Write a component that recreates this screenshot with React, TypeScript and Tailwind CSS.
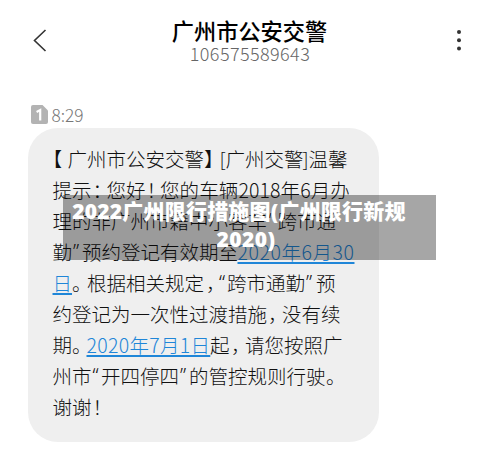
type Segment = { text: string; className: string; link?: boolean };

// Each inner array is one line of the message. Punctuation is half width.
const lines: Segment[][] = [
  [
    { text: "【", className: "w-[15px]" },
    { text: "广州市公安交警", className: "w-[136.5px]" },
    { text: "】", className: "w-[15.5px]" },
    { text: "[", className: "w-[6px]" },
    { text: "广州交警", className: "w-[77px]" },
    { text: "]", className: "w-[6px]" },
    { text: "温馨", className: "w-[40px]" },
  ],
  [
    { text: "提示", className: "w-[40px]" },
    { text: "：", className: "w-[14px]" },
    { text: "您好", className: "w-[40px]" },
    { text: "！", className: "w-[13.5px]" },
    { text: "您的车辆2018年6月办", className: "w-[191px] tracking-[0.1px]" },
  ],
  [
    { text: "理的非广州市籍中小客车", className: "w-[216px]" },
    { text: "“", className: "w-[9px] font-['Noto_Sans']" },
    { text: "跨市通", className: "w-[60px]" },
  ],
  [
    { text: "勤", className: "w-[20.5px]" },
    { text: "”", className: "w-[9px] font-['Noto_Sans']" },
    { text: "预约登记有效期至", className: "w-[155.5px]" },
    { text: "2020年6月30", className: "w-[117px] tracking-[0.55px]", link: true },
  ],
  [
    { text: "日", className: "w-[19.5px]", link: true },
    { text: "。", className: "w-[15px]" },
    { text: "根据相关规定", className: "w-[119px]" },
    { text: "，", className: "w-[13px]" },
    { text: "“", className: "w-[8px] font-['Noto_Sans']" },
    { text: "跨市通勤", className: "w-[79px]" },
    { text: "”", className: "w-[10px] font-['Noto_Sans']" },
    { text: "预", className: "w-[20px]" },
  ],
  [
    { text: "约登记为一次性过渡措施", className: "w-[215.5px]" },
    { text: "，", className: "w-[14px]" },
    { text: "没有续", className: "w-[60px]" },
  ],
  [
    { text: "期", className: "w-[19.5px]" },
    { text: "。", className: "w-[14.5px]" },
    { text: "2020年7月1日", className: "w-[123.5px] tracking-[0.3px]", link: true },
    { text: "起", className: "w-[21px]" },
    { text: "，", className: "w-[14px]" },
    { text: "请您按照广", className: "w-[99px]" },
  ],
  [
    { text: "州市", className: "w-[40px]" },
    { text: "“", className: "w-[8.5px] font-['Noto_Sans']" },
    { text: "开四停四", className: "w-[79px]" },
    { text: "”", className: "w-[9px] font-['Noto_Sans']" },
    { text: "的管控规则行驶", className: "w-[137px]" },
    { text: "。", className: "w-[15px]" },
  ],
  [
    { text: "谢谢", className: "w-[40px]" },
    { text: "！", className: "w-[14px]" },
  ],
];

function Header() {
  return (
    <header className="flex h-[76px] items-start justify-between pr-[38px] pl-[33px]">
      <svg className="mt-[29px] h-[23px] w-[14px]" viewBox="0 0 14 23" fill="none" stroke="#333" strokeWidth="1.6">
        <path d="M12.5 1 1.5 11.5l11 10.5" />
      </svg>
      <div className="flex flex-col items-center pr-[4px]">
        <h1 className="mt-[16px] text-[22.2px] leading-[28px] font-medium whitespace-nowrap text-black">
          广州市公安交警
        </h1>
        <p className="-mt-px pl-px text-[18px] leading-[20px] font-light tracking-[0.4px] text-[#666]">
          106575589643
        </p>
      </div>
      <svg className="mt-[29px] h-[23px] w-[6px]" viewBox="0 0 6 23" fill="#333">
        <circle cx="3" cy="3" r="2" />
        <circle cx="3" cy="11.3" r="2" />
        <circle cx="3" cy="19.6" r="2" />
      </svg>
    </header>
  );
}

function Timestamp() {
  return (
    <div className="flex h-[52px] items-end gap-[3.5px] pb-[3px] pl-[31px]">
      <svg className="mb-px h-[19px] w-[17px]" viewBox="0 0 17 19">
        <path d="M2 0h9.5L17 5.5V17a2 2 0 0 1-2 2H2a2 2 0 0 1-2-2V2a2 2 0 0 1 2-2Z" fill="#b3b3b3" />
        <path d="M5.6 7 9.2 5V15.5" fill="none" stroke="white" strokeWidth="2.2" />
      </svg>
      <span className="text-[17.3px] leading-[21px] font-light text-[#777]">8:29</span>
    </div>
  );
}

export default function App() {
  return (
    <main className="relative h-[455px] w-[500px] overflow-hidden bg-white font-['Noto_Sans_CJK_SC',sans-serif]">
      <Header />
      <Timestamp />
      <section className="ml-[28px] h-[314px] w-[351px] rounded-[30px] bg-[#efefef] pt-[14.5px] pl-[24.5px]">
        {lines.map((line, i) => (
          <p
            key={i}
            className="flex h-[31.1px] text-[19.5px] leading-[31px] font-light whitespace-nowrap text-[#111] [font-feature-settings:'halt']"
          >
            {line.map((s, j) =>
              s.link ? (
                <a key={j} className={`${s.className} shrink-0 text-[#1f86d8] underline decoration-[1.5px] underline-offset-[1.5px]`}>
                  {s.text}
                </a>
              ) : (
                <span key={j} className={`${s.className} shrink-0`}>
                  {s.text}
                </span>
              )
            )}
          </p>
        ))}
      </section>
      <div className="absolute top-[195px] left-[63px] flex h-[65px] w-[373px] flex-col items-center bg-black/35 pt-[2px] font-['Noto_Sans','Noto_Sans_CJK_SC',sans-serif] text-[21px] leading-[28px] font-black tracking-[0.2px] whitespace-nowrap text-white">
        <span className="pr-[21px]">2022广州限行措施图(广州限行新规</span>
        <span className="pr-[7px] tracking-[0.4px]">2020)</span>
      </div>
    </main>
  );
}
